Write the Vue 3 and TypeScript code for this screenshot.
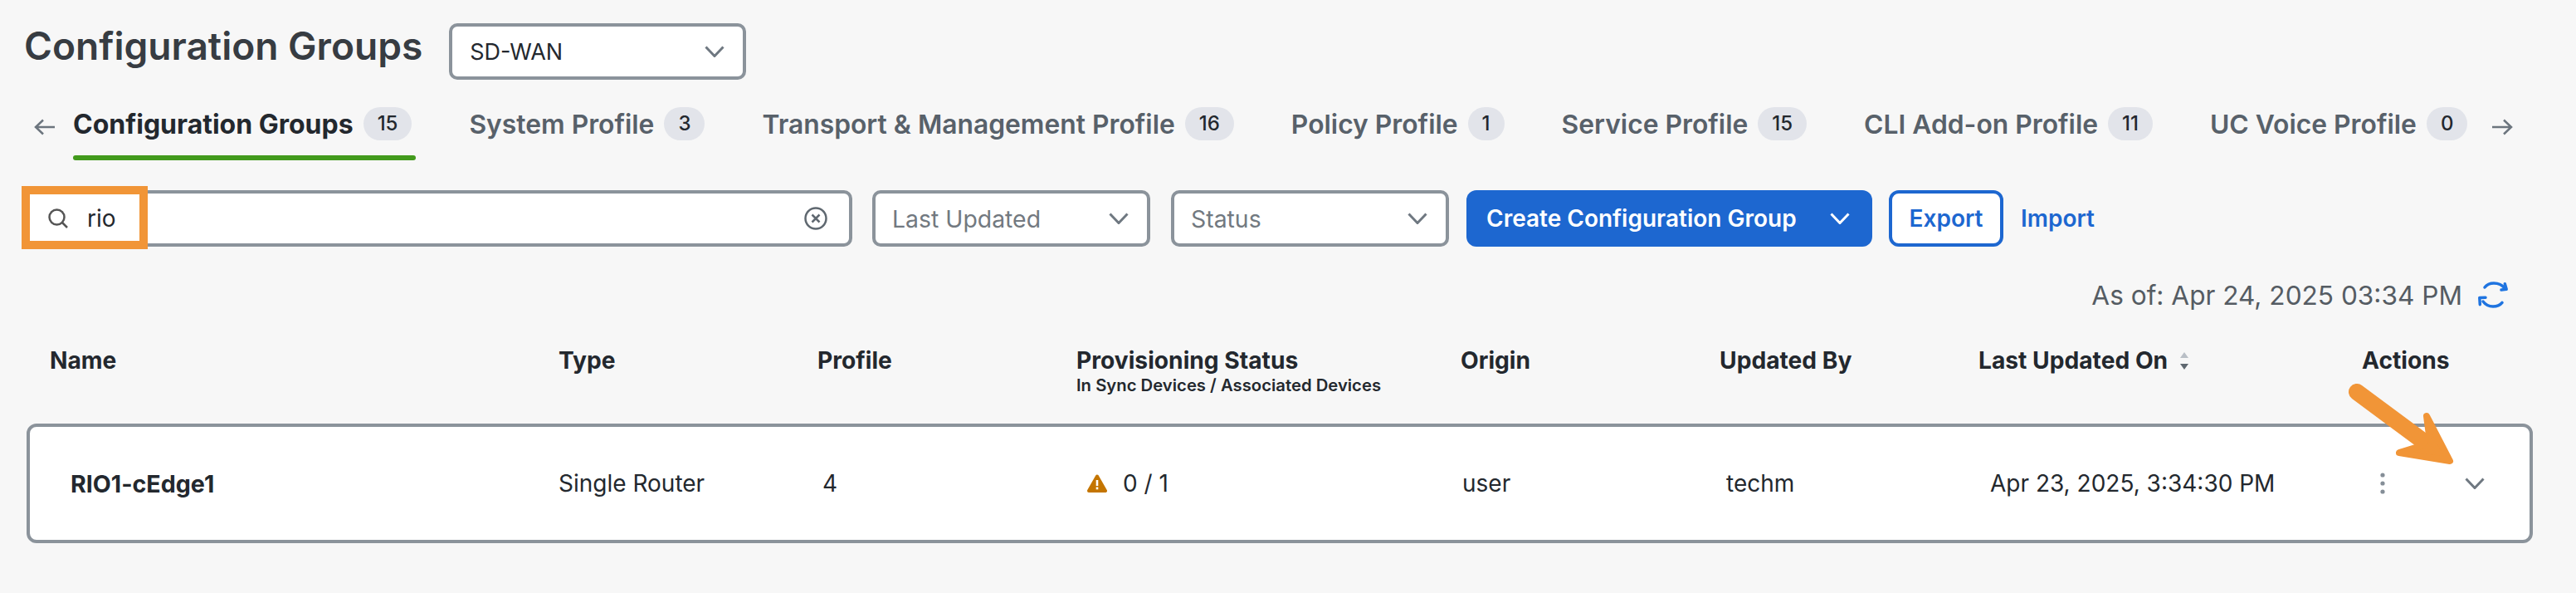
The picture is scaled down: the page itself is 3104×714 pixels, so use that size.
<template>
  <div class="page">
    <div class="title-row">
      <h1 class="title">Configuration Groups</h1>
      <div class="select select-scope">
        <span class="select-value">SD-WAN</span>
        <svg class="chevron" viewBox="0 0 24 14"><path d="M1.500 1.500 12 12.500 22.500 1.500" /></svg>
      </div>
    </div>

    <div class="tabs">
      <svg class="tab-arrow" viewBox="0 0 26 20"><path d="M25 10H2M11 1.500 2 10l9 8.500" /></svg>
      <div
        v-for="(tab, index) in tabs"
        :key="tab.label"
        :class="['tab', { active: index === 0 }]"
      >
        <span class="tab-label">{{ tab.label }}</span>
        <span class="tab-badge">{{ tab.count }}</span>
      </div>
      <svg class="tab-arrow tab-arrow-next" viewBox="0 0 26 20"><path d="M1 10h23M15 1.500 24 10l-9 8.500" /></svg>
    </div>

    <div class="filters">
      <div class="select search">
        <svg class="search-icon" viewBox="0 0 24 24"><circle cx="10.500" cy="10.500" r="9" /><path d="m17 17 6 6" /></svg>
        <span class="search-value">rio</span>
        <svg class="clear-icon" viewBox="0 0 28 28"><circle cx="14" cy="14" r="12.500" /><path d="m9.500 9.500 9 9M18.500 9.500l-9 9" /></svg>
      </div>
      <div class="select select-filter">
        <span class="placeholder">Last Updated</span>
        <svg class="chevron" viewBox="0 0 24 14"><path d="M1.500 1.500 12 12.500 22.500 1.500" /></svg>
      </div>
      <div class="select select-filter">
        <span class="placeholder">Status</span>
        <svg class="chevron" viewBox="0 0 24 14"><path d="M1.500 1.500 12 12.500 22.500 1.500" /></svg>
      </div>
      <button class="btn-primary">
        Create Configuration Group
        <svg class="chevron" viewBox="0 0 24 14"><path d="M1.500 1.500 12 12.500 22.500 1.500" /></svg>
      </button>
      <button class="btn-outline">Export</button>
      <a class="link">Import</a>
    </div>

    <div class="as-of">
      <span>As of: Apr 24, 2025 03:34 PM</span>
      <svg class="refresh" viewBox="0 0 34 32">
        <path d="M7 7c3-4 7-5 11-5 5 0 10 2 13 6" />
        <path d="M31.300 2.700 33.200 9.300 27 10" />
        <path d="M28 25.300C25 29 21 30 17 30c-5 0-9-2-12-6" />
        <path d="M1.300 27.700.800 19.500 8 19.300" />
      </svg>
    </div>

    <div class="table-head">
      <div>Name</div>
      <div>Type</div>
      <div>Profile</div>
      <div>
        Provisioning Status
        <div class="head-sub">In Sync Devices / Associated Devices</div>
      </div>
      <div>Origin</div>
      <div>Updated By</div>
      <div class="sortable">
        Last Updated On
        <svg class="sort" viewBox="0 0 10 21"><path class="sort-up" d="M5 0l5 7H0z" /><path d="M5 21 0 14h10z" /></svg>
      </div>
      <div>Actions</div>
    </div>

    <div class="table-row">
      <div class="cell-name">RIO1-cEdge1</div>
      <div>Single Router</div>
      <div class="cell-profile">4</div>
      <div class="cell-status">
        <svg class="warn" viewBox="0 0 24 22">
          <polygon points="12,2.500 22,20 2,20" />
          <rect x="10.700" y="7" width="2.600" height="7" fill="#fff" />
          <rect x="10.700" y="15.500" width="2.600" height="2.800" fill="#fff" />
        </svg>
        0 / 1
      </div>
      <div class="cell-origin">user</div>
      <div class="cell-by">techm</div>
      <div class="cell-date">Apr 23, 2025, 3:34:30 PM</div>
      <div class="cell-actions">
        <svg class="kebab" viewBox="0 0 6 26"><circle cx="3" cy="3" r="2.600" /><circle cx="3" cy="13" r="2.600" /><circle cx="3" cy="23" r="2.600" /></svg>
        <svg class="chevron row-chevron" viewBox="0 0 24 14"><path d="M1.500 1.500 12 12.500 22.500 1.500" /></svg>
      </div>
    </div>

    <!-- Callouts drawn over the screenshot -->
    <div class="callout-box"></div>
    <svg class="callout-arrow" viewBox="0 0 140 110">
      <path class="shaft" d="M10 10 91 70" />
      <path class="head" d="M94 39 122 93 61 83 87 75 97 62z" />
    </svg>
  </div>
</template>

<script setup lang="ts">
interface Tab {
  label: string
  count: number
}

const tabs: Tab[] = [
  { label: 'Configuration Groups', count: 15 },
  { label: 'System Profile', count: 3 },
  { label: 'Transport & Management Profile', count: 16 },
  { label: 'Policy Profile', count: 1 },
  { label: 'Service Profile', count: 15 },
  { label: 'CLI Add-on Profile', count: 11 },
  { label: 'UC Voice Profile', count: 0 },
]
</script>

<style>
html,
body {
  margin: 0;
  background: #f7f7f7;
}
</style>

<style scoped>
.page {
  position: relative;
  width: 3104px;
  height: 714px;
  overflow: hidden;
  background: #f7f7f7;
  font-family: Inter, "Liberation Sans", sans-serif;
  color: #23282e;
}

.title-row {
  display: flex;
  align-items: center;
  gap: 32px;
  height: 68px;
  padding: 28px 0 0 29px;
}

.title {
  margin: 0 0 14px;
  font-size: 46.100px;
  font-weight: 600;
  color: #373c42;
}

.select {
  display: flex;
  align-items: center;
  justify-content: space-between;
  box-sizing: border-box;
  height: 68px;
  border: 4px solid #8b939b;
  border-radius: 10px;
  background: #fff;
}

.select-scope {
  width: 358px;
  padding: 0 22px 0 21px;
  font-size: 27px;
  color: #23282e;
}

.chevron {
  width: 24px;
  height: 14px;
  fill: none;
  stroke: #6f7881;
  stroke-width: 3;
  flex: none;
}

.tabs {
  display: flex;
  align-items: flex-start;
  height: 64px;
  margin-top: 33px;
  padding-left: 41px;
}

.tab-arrow {
  width: 26px;
  height: 20px;
  margin-top: 14px;
  margin-right: 21px;
  fill: none;
  stroke: #6c757e;
  stroke-width: 2.500;
  flex: none;
}

.tab-arrow-next {
  margin-left: -40px;
  margin-right: 0;
}

.tab {
  position: relative;
  display: flex;
  align-items: center;
  gap: 12px;
  height: 40px;
  margin-right: 64px;
  padding-right: 5px;
  font-size: 31.800px;
  font-weight: 600;
  color: #58616a;
}

.tab.active {
  font-size: 32px;
  font-weight: 700;
  color: #23282e;
}

.tab.active::after {
  content: "";
  position: absolute;
  left: 0;
  right: 0;
  bottom: -24px;
  height: 6px;
  border-radius: 3px;
  background: #429a1c;
}

.tab-badge {
  box-sizing: border-box;
  height: 40px;
  padding: 0 17px;
  border-radius: 20px;
  background: #e2e4ea;
  color: #23282e;
  font-size: 24px;
  font-weight: 500;
  line-height: 40px;
  text-align: center;
}

.filters {
  display: flex;
  align-items: center;
  height: 68px;
  margin-top: 36px;
  padding-left: 28px;
}

.search {
  width: 999px;
  padding: 0 26px 0 26px;
  justify-content: flex-start;
  margin-right: 24px;
}

.search-icon {
  width: 24px;
  height: 24px;
  fill: none;
  stroke: #555;
  stroke-width: 2.500;
  flex: none;
}

.search-value {
  margin-left: 23px;
  font-size: 28px;
  color: #23282e;
}

.clear-icon {
  width: 28px;
  height: 28px;
  margin-left: auto;
  fill: none;
  stroke: #5f6870;
  stroke-width: 2.500;
  flex: none;
}

.select-filter {
  width: 335px;
  padding: 0 22px 0 20px;
  margin-right: 25px;
}

.select-filter + .select-filter {
  margin-right: 21px;
}

.placeholder {
  font-size: 28.400px;
  color: #727980;
}

.btn-primary {
  display: flex;
  align-items: center;
  justify-content: space-between;
  box-sizing: border-box;
  width: 489px;
  height: 68px;
  margin-right: 20px;
  padding: 0 27px 0 24px;
  border: none;
  border-radius: 12px;
  background: #1d67d0;
  color: #fff;
  font-family: inherit;
  font-size: 28px;
  font-weight: 600;
}

.btn-primary .chevron {
  stroke: #fff;
}

.btn-outline {
  box-sizing: border-box;
  width: 138px;
  height: 68px;
  margin-right: 21px;
  padding: 0;
  border: 4px solid #1d67d0;
  border-radius: 12px;
  background: #fff;
  color: #1d67d0;
  font-family: inherit;
  font-size: 28px;
  font-weight: 600;
}

.link {
  color: #1d67d0;
  font-size: 28px;
  font-weight: 600;
}

.as-of {
  display: flex;
  align-items: center;
  justify-content: flex-end;
  gap: 20px;
  height: 32px;
  margin-top: 42px;
  padding-right: 83px;
  font-size: 31.600px;
  color: #555c63;
}

.refresh {
  width: 34px;
  height: 32px;
  fill: none;
  stroke: #1f74e0;
  stroke-width: 3.500;
  stroke-linecap: round;
  stroke-linejoin: round;
  overflow: visible;
}

.table-head,
.table-row {
  display: grid;
  grid-template-columns: 613px 312px 312px 463px 312px 312px 462px 1fr;
}

.table-head {
  height: 92px;
  margin-top: 47px;
  padding-left: 60px;
  font-size: 28.200px;
  font-weight: 700;
  line-height: 32px;
  color: #23282e;
}

.head-sub {
  margin-top: 2px;
  font-size: 20.300px;
  font-weight: 600;
  line-height: 24px;
}

.sortable {
  display: flex;
  align-items: flex-start;
  gap: 15px;
}

.sort {
  width: 10px;
  height: 21px;
  margin-top: 6px;
  fill: #5f6870;
}

.sort-up {
  fill: #b9bfc6;
}

.table-row {
  box-sizing: border-box;
  align-items: center;
  width: 3020px;
  height: 144px;
  margin-left: 32px;
  padding-left: 24px;
  border: 4px solid #8b939b;
  border-radius: 12px;
  background: #fff;
  font-size: 28px;
  color: #23282e;
}

.cell-name {
  padding-left: 25px;
  font-size: 28.600px;
  font-weight: 700;
}

.cell-profile {
  padding-left: 6px;
}

.cell-status {
  display: flex;
  align-items: center;
  gap: 19px;
  padding-left: 13px;
}

.warn {
  width: 24px;
  height: 22px;
  fill: #c47500;
  stroke: #c47500;
  stroke-width: 4;
  stroke-linejoin: round;
}

.warn rect {
  stroke: none;
}

.cell-origin {
  padding-left: 2px;
}

.cell-by {
  padding-left: 8px;
}

.cell-date {
  padding-left: 14px;
}

.cell-actions {
  display: flex;
  align-items: center;
  padding-left: 22px;
}

.kebab {
  width: 6px;
  height: 26px;
  fill: #858e97;
}

.row-chevron {
  width: 26px;
  height: 14px;
  margin-left: 95px;
}

.callout-box {
  position: absolute;
  left: 26px;
  top: 224px;
  box-sizing: border-box;
  width: 152px;
  height: 76px;
  border: 10px solid #f19537;
}

.callout-arrow {
  position: absolute;
  left: 2830px;
  top: 462px;
  width: 140px;
  height: 110px;
}

.shaft {
  fill: none;
  stroke: #f19537;
  stroke-width: 20;
  stroke-linecap: round;
}

.head {
  fill: #f19537;
  stroke: #f19537;
  stroke-width: 8;
  stroke-linejoin: round;
}
</style>
